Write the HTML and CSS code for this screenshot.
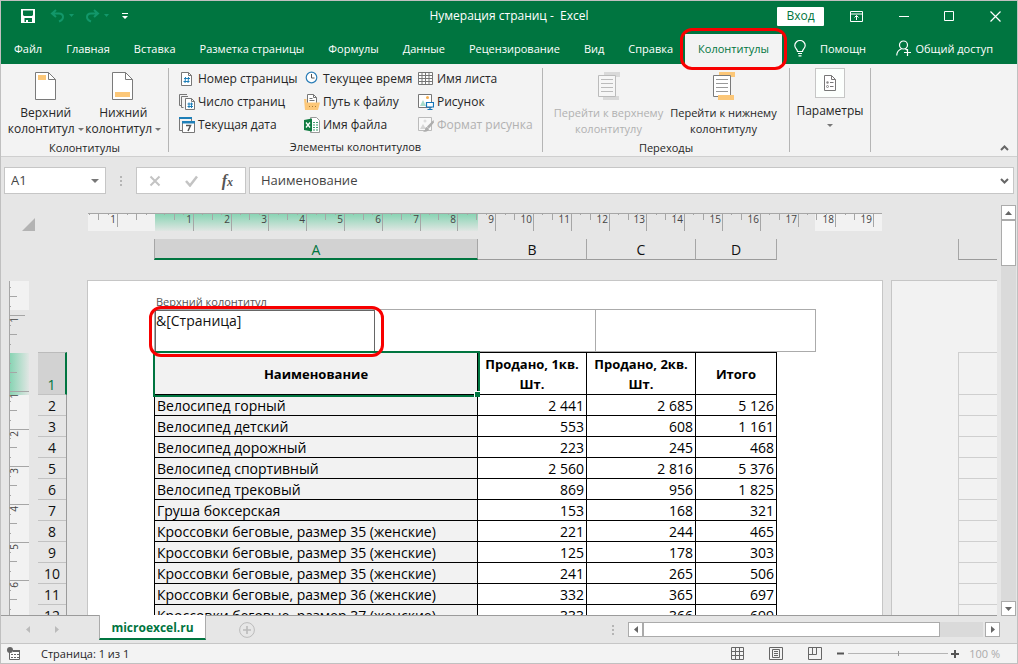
FILE: index.html
```html
<!DOCTYPE html>
<html lang="ru">
<head>
<meta charset="utf-8">
<title>Нумерация страниц - Excel</title>
<link rel="stylesheet" href="styles.css">
</head>
<body>
<div class="window">
  <header class="top">
    <div class="titlebar">
      <div class="quick">
        <button class="icon-btn" aria-label="Сохранить"><svg width="14" height="14" viewBox="0 0 14 14"><path fill="#fff" fill-rule="evenodd" d="M0 0h14v14H0zM2 1.500V6l1 1h8l1-1V1.500zM3.500 9v4H5v-2h2v2h4V9z"/></svg></button>
        <button class="icon-btn dim" aria-label="Отменить"><svg width="24" height="14" viewBox="0 0 24 14"><path d="M6 1L2 4.500 6 8M2 4.500h7q4 0 4 3.500 0 3-4 4.500" fill="none" stroke="#12976a" stroke-width="2"/><path d="M19 5h5l-2.500 3z" fill="#12976a"/></svg></button>
        <button class="icon-btn dim" aria-label="Вернуть"><svg width="24" height="14" viewBox="0 0 24 14"><path d="M9 1l4 3.500L9 8M13 4.500H6Q2 4.500 2 8q0 3 4 4.500" fill="none" stroke="#12976a" stroke-width="2"/><path d="M19 5h5l-2.500 3z" fill="#12976a"/></svg></button>
        <button class="icon-btn" aria-label="Настройка панели"><svg width="6" height="7" viewBox="0 0 6 7"><path d="M0 0h6v1H0zM0 3h6L3 6z" fill="#fff"/></svg></button>
      </div>
      <div class="doc-title">Нумерация страниц&nbsp;-&nbsp; Excel</div>
      <div class="win-controls">
        <button class="login">Вход</button>
        <button class="icon-btn" aria-label="Параметры отображения ленты"><svg width="13" height="11" viewBox="0 0 13 11"><path d="M.5.5h12v10H.5zM.5 3h12M6.500 9V4.500M4.500 6.500l2-2 2 2" fill="none" stroke="#fff"/></svg></button>
        <button class="icon-btn" aria-label="Свернуть"><svg width="11" height="11" viewBox="0 0 11 11"><path d="M1 5.500h10" stroke="#fff"/></svg></button>
        <button class="icon-btn" aria-label="Развернуть"><svg width="11" height="11" viewBox="0 0 11 11"><path d="M.5.5h9v9h-9z" fill="none" stroke="#fff"/></svg></button>
        <button class="icon-btn" aria-label="Закрыть"><svg width="11" height="11" viewBox="0 0 11 11"><path d="M.5.5l10 10M10.500.5l-10 10" fill="none" stroke="#fff" stroke-width="1.200"/></svg></button>
      </div>
    </div>
    <nav class="tabs">
      <button class="tab">Файл</button>
      <button class="tab">Главная</button>
      <button class="tab">Вставка</button>
      <button class="tab">Разметка страницы</button>
      <button class="tab">Формулы</button>
      <button class="tab">Данные</button>
      <button class="tab">Рецензирование</button>
      <button class="tab">Вид</button>
      <button class="tab">Справка</button>
      <button class="tab active">Колонтитулы</button>
      <button class="tab helper"><svg width="12" height="17" viewBox="0 0 12 17"><path d="M3.500 11.500C3.500 9 .8 8.500.8 5.500a5.200 5 0 0 1 10.400 0C11.200 8.500 8.500 9 8.500 11.500zM4 13.500h4M4.500 15.800h3" fill="none" stroke="#fff" stroke-width="1.200"/></svg>Помощн</button>
      <button class="tab share"><svg width="15" height="17" viewBox="0 0 15 17"><circle cx="7.500" cy="5" r="4" fill="none" stroke="#fff" stroke-width="1.200"/><path d="M.7 15.500Q1 10.500 5.500 8.800M9.300 8.800L11 10M8 12.500h7M11.500 9v7" fill="none" stroke="#fff" stroke-width="1.200"/></svg>Общий доступ</button>
    </nav>
  </header>

  <section class="ribbon">
    <div class="group g-hf">
      <div class="group-body">
        <button class="big"><svg width="22" height="28" viewBox="0 0 22 28"><path d="M.5.5h13l7 7v20H.5z" fill="#fff" stroke="#7a7a7a"/><path d="M13.500.5v7h7" fill="none" stroke="#7a7a7a"/><path d="M3 3h8v5H3z" fill="#fcc778"/></svg><span>Верхний<br>колонтитул <i class="caret"></i></span></button>
        <button class="big"><svg width="22" height="28" viewBox="0 0 22 28"><path d="M.5.5h13l7 7v20H.5z" fill="#fff" stroke="#7a7a7a"/><path d="M13.500.5v7h7" fill="none" stroke="#7a7a7a"/><path d="M3 20h15v5H3z" fill="#fcc778"/></svg><span>Нижний<br>колонтитул <i class="caret"></i></span></button>
      </div>
      <div class="group-label">Колонтитулы</div>
    </div>
    <div class="group g-items">
      <div class="group-body items">
        <button class="small"><svg width="16" height="16" viewBox="0 0 16 16"><path d="M2.500 1.500h7l3 3v10h-10z" fill="#fff" stroke="#777"/><path d="M9.500 1.500v3h3" fill="none" stroke="#777"/><path d="M6.500 6l-.5 6M9.500 6L9 12M5 7.500h6M4.500 10.500h6" stroke="#1e7fb8" fill="none"/></svg>Номер страницы</button>
        <button class="small"><svg width="16" height="16" viewBox="0 0 16 16"><path d="M2.500 11.500h-2V.5H8M4.500 13.500h-2V2.500H9" fill="none" stroke="#777"/><path d="M6.500 4.500h6l3 3v8h-9z" fill="#fff" stroke="#777"/><path d="M12.500 4.500v3h3" fill="none" stroke="#777"/><path d="M10 8.500V14M12.500 8.500V14M8.500 10h5.500M8.500 12.500h5.500" stroke="#1e7fb8" fill="none"/></svg>Число страниц</button>
        <button class="small"><svg width="16" height="16" viewBox="0 0 16 16"><path d="M3 13.500H.5v-12h12V4" fill="none" stroke="#777"/><path d="M0 0h13v2H0z" fill="#1e7fb8"/><path d="M3.500 4.500h12v11h-12z" fill="#fff" stroke="#777"/><path d="M3 4h13v2.500H3z" fill="#1e7fb8"/><path d="M7 8.500h4.500L9 14" fill="none" stroke="#555" stroke-width="1.500"/></svg>Текущая дата</button>
        <button class="small"><svg width="16" height="16" viewBox="0 0 16 16"><circle cx="7.500" cy="6.500" r="5.300" fill="#fff" stroke="#2d7fb8" stroke-width="1.200"/><path d="M7.500 3v4h3" fill="none" stroke="#555"/></svg>Текущее время</button>
        <button class="small"><svg width="16" height="16" viewBox="0 0 16 16"><path d="M3.500 10V.5h6l3 3V10" fill="#fff" stroke="#777"/><path d="M9.500.5v3h3M5.500 4.500h3M5.500 6.500h5" fill="none" stroke="#777"/><path d="M0 5h2.500v3.500H16L14 16H1z" fill="#fcc778"/><path d="M5 12.500h1M8 12.500h1M11 12.500h1" stroke="#a67c35"/></svg>Путь к файлу</button>
        <button class="small"><svg width="16" height="16" viewBox="0 0 16 16"><path d="M6.500.5h6l3 3v12h-9z" fill="#fff" stroke="#999"/><path d="M9 5.500h2M12 5.500h2M9 8h2M12 8h2M9 10.500h2M12 10.500h2M9 13h2M12 13h2" stroke="#3d9b6d"/><path d="M0 3l8-1.500v13L0 13z" fill="#107c41"/><path d="M2 5.500l4 5M6 5.500l-4 5" stroke="#fff" stroke-width="1.300"/></svg>Имя файла</button>
        <button class="small"><svg width="16" height="16" viewBox="0 0 16 16"><path d="M.5 1.500h14v12H.5zM.5 4.500h14M.5 7.500h14M.5 10.500h14M4 1.500v12M7.500 1.500v12M11 1.500v12" fill="#fff" stroke="#777"/></svg>Имя листа</button>
        <button class="small"><svg width="16" height="16" viewBox="0 0 16 16"><path d="M.5.5h13v13H.5z" fill="#fff" stroke="#777"/><circle cx="9.500" cy="3.500" r="1.500" fill="#f5ad4e"/><path d="M2 12l3-6 3 6z" fill="#a7dccb"/><path d="M8.500 8.500h7v4.500h-7zM12 13v2.500M9.500 15.500h5" fill="#fff" stroke="#1075bb" stroke-width="1.200"/></svg>Рисунок</button>
        <button class="small" disabled><svg width="16" height="16" viewBox="0 0 16 16"><path d="M.5.5h13v13H.5z" fill="#f8f8f8" stroke="#bbb"/><circle cx="7" cy="4" r="1.500" fill="#ddd"/><path d="M2 12l3-5 3 5z" fill="#d5d5d5"/><path d="M15.500 3L9 9.500l2 2 5-6zM9 10q-2 0-2 3l-2 1.500q5 1 6-2.500z" fill="#adadad"/></svg>Формат рисунка</button>
      </div>
      <div class="group-label">Элементы колонтитулов</div>
    </div>
    <div class="group g-nav">
      <div class="group-body">
        <button class="big" disabled><svg width="22" height="28" viewBox="0 0 22 28"><path d="M6 0h16v5H6zM5 24h16v4H5z" fill="#d9d9d9"/><path d="M.5 3.500h17v21H.5z" fill="#f6f6f6" stroke="#bbb"/><path d="M3 7.500h12M3 11.500h12M3 15.500h12M3 19.500h12" stroke="#bbb"/></svg><span>Перейти к верхнему<br>колонтитулу</span></button>
        <button class="big"><svg width="22" height="28" viewBox="0 0 22 28"><path d="M6 0h16v5H6z" fill="#fcc778"/><path d="M.5 3.500h17v21H.5z" fill="#fff" stroke="#7a7a7a"/><path d="M3 7.500h12M3 11.500h12M3 15.500h12M3 19.500h12" stroke="#999"/><path d="M5 23h16v5H5z" fill="#fcc778"/></svg><span>Перейти к нижнему<br>колонтитулу</span></button>
      </div>
      <div class="group-label">Переходы</div>
    </div>
    <div class="group g-opt">
      <button class="options"><span class="options-icon"><svg width="12" height="16" viewBox="0 0 12 16"><path d="M.5.5h7l4 4v11H.5z" fill="#fff" stroke="#777"/><path d="M7.500.5v4h4M6 7.500h3.500M6 11.500h3.500" fill="none" stroke="#777"/><circle cx="3.500" cy="7.500" r="1.200" fill="#888"/><circle cx="3.500" cy="11.500" r="1" fill="none" stroke="#888"/></svg></span>Параметры<i class="caret"></i></button>
    </div>
    <button class="collapse" aria-label="Свернуть ленту"><svg width="9" height="6" viewBox="0 0 9 6"><path d="M1 5l3.500-3.500L8 5" fill="none" stroke="#666" stroke-width="2"/></svg></button>
  </section>

  <section class="formula-bar">
    <div class="name-box"><input type="text" value="A1" aria-label="Имя"><i class="caret"></i></div>
    <div class="grip"><i></i><i></i><i></i></div>
    <div class="fx-box">
      <button class="icon-btn" aria-label="Отмена"><svg width="12" height="12" viewBox="0 0 12 12"><path d="M1.500 1.500l9 9M10.500 1.500l-9 9" stroke="#c3c3c3" stroke-width="2"/></svg></button>
      <button class="icon-btn" aria-label="Ввод"><svg width="13" height="12" viewBox="0 0 13 12"><path d="M1 6l4 4.500L12 1.500" fill="none" stroke="#c3c3c3" stroke-width="2.500"/></svg></button>
      <button class="icon-btn fx" aria-label="Вставить функцию">f<small>x</small></button>
    </div>
    <div class="formula"><input type="text" value="Наименование" aria-label="Строка формул"><svg width="9" height="6" viewBox="0 0 9 6"><path d="M1 1l3.500 3.500L8 1" fill="none" stroke="#666" stroke-width="2"/></svg></div>
  </section>

  <main class="work">
    <div class="canvas">
      <div class="ruler-row">
        <svg class="corner" width="13" height="13" viewBox="0 0 13 13"><path d="M13 0v13H0z" fill="#b3b3b3"/></svg>
        <svg class="h-ruler" width="795" height="18" viewBox="0 0 795 18">
          <defs><linearGradient id="gh" x1="0" y1="0" x2="0" y2="1"><stop offset="0" stop-color="#84d3b1"/><stop offset="1" stop-color="#e0e6e3"/></linearGradient></defs>
          <path d="M0 0h67v18H0zM727 0h67v18h-67z" fill="#f2f2f2"/>
          <path d="M67 0h323v18H67z" fill="url(#gh)"/>
          <path class="tick" d="M0 .5h794M29.500 0v14M105.500 0v18M143.500 0v18M180.500 0v18M218.500 0v18M256.500 0v18M294.500 0v18M332.500 0v18M369.500 0v18M407.500 0v18M445.500 0v18M483.500 0v18M521.500 0v18M558.500 0v18M596.500 0v18M634.500 0v18M672.500 0v18M710.500 0v14M747.500 0v14M785.500 0v14"/>
          <path class="tick" d="M10.500 0v7M48.500 0v7M86.500 0v7M124.500 0v7M161.500 0v7M199.500 0v7M237.500 0v7M275.500 0v7M313.500 0v7M350.500 0v7M388.500 0v7M426.500 0v7M464.500 0v7M502.500 0v7M540.500 0v7M577.500 0v7M615.500 0v7M653.500 0v7M691.500 0v7M728.500 0v7M766.500 0v7"/>
          <path class="tick" d="M1.500 0v2M20.500 0v2M39.500 0v2M58.500 0v2M76.500 0v2M95.500 0v2M114.500 0v2M133.500 0v2M152.500 0v2M171.500 0v2M190.500 0v2M209.500 0v2M228.500 0v2M247.500 0v2M265.500 0v2M284.500 0v2M303.500 0v2M322.500 0v2M341.500 0v2M360.500 0v2M379.500 0v2M398.500 0v2M417.500 0v2M435.500 0v2M454.500 0v2M473.500 0v2M492.500 0v2M511.500 0v2M530.500 0v2M549.500 0v2M568.500 0v2M587.500 0v2M605.500 0v2M624.500 0v2M643.500 0v2M662.500 0v2M681.500 0v2M700.500 0v2M719.500 0v2M738.500 0v2M757.500 0v2M775.500 0v2"/>
          <g class="nums end"><text x="28" y="10">1</text><text x="104" y="10">1</text><text x="142" y="10">2</text><text x="179" y="10">3</text><text x="217" y="10">4</text><text x="255" y="10">5</text><text x="293" y="10">6</text><text x="331" y="10">7</text><text x="368" y="10">8</text><text x="406" y="10">9</text><text x="444" y="10">10</text><text x="482" y="10">11</text><text x="520" y="10">12</text><text x="557" y="10">13</text><text x="595" y="10">14</text><text x="633" y="10">15</text><text x="671" y="10">16</text><text x="709" y="10">17</text><text x="746" y="10">18</text><text x="784" y="10">19</text></g>
        </svg>
      </div>
      <div class="col-heads">
        <div class="col-head a">A</div><div class="col-head b">B</div><div class="col-head b">C</div><div class="col-head d">D</div>
        <div class="col-head next"></div>
      </div>
      <div class="pages">
        <svg class="v-ruler" width="20" height="340" viewBox="0 0 20 340">
          <defs><linearGradient id="gv"><stop offset="0" stop-color="#84d3b1"/><stop offset="1" stop-color="#e0e6e3"/></linearGradient></defs>
          <path d="M0 1h20v29H0zM0 115h20v225H0z" fill="#f2f2f2"/>
          <path d="M0 73h20v42H0z" fill="url(#gv)"/>
          <path class="tick" d="M.5 1v339M0 35.500h16M0 111.500h20M0 149.500h20M0 186.500h20M0 224.500h20M0 262.500h20M0 300.500h20"/>
          <path class="tick" d="M0 16.500h8M0 54.500h8M0 92.500h8M0 130.500h8M0 167.500h8M0 205.500h8M0 243.500h8M0 281.500h8M0 319.500h8M0 7.500h2M0 26.500h2M0 45.500h2M0 64.500h2M0 83.500h2M0 102.500h2M0 121.500h2M0 140.500h2M0 158.500h2M0 177.500h2M0 196.500h2M0 215.500h2M0 234.500h2M0 253.500h2M0 272.500h2M0 291.500h2M0 310.500h2M0 329.500h2"/>
          <g class="nums end"><text transform="translate(9 37) rotate(-90)">1</text><text transform="translate(9 113) rotate(-90)">1</text><text transform="translate(9 151) rotate(-90)">2</text><text transform="translate(9 188) rotate(-90)">3</text><text transform="translate(9 226) rotate(-90)">4</text><text transform="translate(9 264) rotate(-90)">5</text><text transform="translate(9 302) rotate(-90)">6</text></g>
        </svg>
        <div class="row-heads">
          <div class="row-head first">1</div><div class="row-head">2</div><div class="row-head">3</div><div class="row-head">4</div><div class="row-head">5</div><div class="row-head">6</div><div class="row-head">7</div><div class="row-head">8</div><div class="row-head">9</div><div class="row-head">10</div><div class="row-head">11</div><div class="row-head">12</div>
        </div>
        <div class="page">
          <label class="hf-label" for="hf-left">Верхний колонтитул</label>
          <div class="hf">
            <div class="hf-cell current"><input id="hf-left" type="text" value="&amp;[Страница]"></div>
            <div class="hf-cell"></div>
            <div class="hf-cell"></div>
          </div>
          <table class="sheet">
            <colgroup><col class="ca"><col class="cb"><col class="cb"><col class="cd"></colgroup>
            <thead><tr><th class="selected">Наименование<i class="handle"></i></th><th>Продано, 1кв. Шт.</th><th>Продано, 2кв. Шт.</th><th>Итого</th></tr></thead>
            <tbody>
              <tr><td>Велосипед горный</td><td>2 441</td><td>2 685</td><td>5 126</td></tr>
              <tr><td>Велосипед детский</td><td>553</td><td>608</td><td>1 161</td></tr>
              <tr><td>Велосипед дорожный</td><td>223</td><td>245</td><td>468</td></tr>
              <tr><td>Велосипед спортивный</td><td>2 560</td><td>2 816</td><td>5 376</td></tr>
              <tr><td>Велосипед трековый</td><td>869</td><td>956</td><td>1 825</td></tr>
              <tr><td>Груша боксерская</td><td>153</td><td>168</td><td>321</td></tr>
              <tr><td>Кроссовки беговые, размер 35 (женские)</td><td>221</td><td>244</td><td>465</td></tr>
              <tr><td>Кроссовки беговые, размер 35 (женские)</td><td>125</td><td>178</td><td>303</td></tr>
              <tr><td>Кроссовки беговые, размер 35 (женские)</td><td>241</td><td>265</td><td>506</td></tr>
              <tr><td>Кроссовки беговые, размер 36 (женские)</td><td>332</td><td>365</td><td>697</td></tr>
              <tr><td>Кроссовки беговые, размер 37 (женские)</td><td>333</td><td>366</td><td>699</td></tr>
            </tbody>
          </table>
        </div>
        <div class="page next-page"><div class="ghost-grid"></div></div>
      </div>
    </div>
    <div class="v-scroll">
      <button aria-label="Вверх"><svg width="7" height="4" viewBox="0 0 7 4"><path d="M0 4l3.500-4L7 4z" fill="#666"/></svg></button>
      <div class="thumb"></div>
      <div class="track"></div>
      <button aria-label="Вниз"><svg width="7" height="4" viewBox="0 0 7 4"><path d="M0 0l3.500 4L7 0z" fill="#666"/></svg></button>
    </div>
  </main>

  <div class="sheet-bar">
    <div class="sheet-nav">
      <button class="icon-btn" aria-label="Предыдущий лист"><svg width="4" height="7" viewBox="0 0 4 7"><path d="M4 0v7L0 3.500z" fill="#bbb"/></svg></button>
      <button class="icon-btn" aria-label="Следующий лист"><svg width="4" height="7" viewBox="0 0 4 7"><path d="M0 0v7l4-3.500z" fill="#bbb"/></svg></button>
    </div>
    <button class="sheet-tab">microexcel.ru</button>
    <button class="icon-btn add" aria-label="Новый лист"><svg width="16" height="16" viewBox="0 0 16 16"><circle cx="8" cy="8" r="7.400" fill="none" stroke="#bbb"/><path d="M8 4v8M4 8h8" stroke="#bbb" stroke-width="1.600"/></svg></button>
    <div class="grip"><i></i><i></i><i></i></div>
    <div class="h-scroll">
      <button aria-label="Влево"><svg width="4" height="7" viewBox="0 0 4 7"><path d="M4 0v7L0 3.500z" fill="#666"/></svg></button>
      <div class="thumb"></div>
      <div class="track"></div>
      <button aria-label="Вправо"><svg width="4" height="7" viewBox="0 0 4 7"><path d="M0 0v7l4-3.500z" fill="#666"/></svg></button>
    </div>
  </div>

  <footer class="status">
    <button class="icon-btn" aria-label="Запись макроса"><svg width="13" height="13" viewBox="0 0 13 13"><path d="M2.500 3.500h10v9h-10z" fill="#fff" stroke="#666"/><path d="M6 3h7v2H6z" fill="#666"/><path d="M4 7.500h2M7 7.500h2M10 7.500h2M4 10.500h2M7 10.500h2M10 10.500h2" stroke="#666"/><circle cx="3" cy="3" r="3" fill="#666"/></svg></button>
    <span class="status-text">Страница: 1 из 1</span>
    <div class="views">
      <button class="icon-btn" aria-label="Обычный"><svg width="13" height="13" viewBox="0 0 13 13"><path d="M.5.5h12v12H.5zM.5 4.500h12M.5 8.500h12M4.500.5v12M8.500.5v12" fill="none" stroke="#666"/></svg></button>
      <button class="icon-btn" aria-label="Разметка страницы"><svg width="14" height="13" viewBox="0 0 14 13"><path d="M.5.5h13v12H.5zM3.500 2.500h7v8h-7zM5 4.500h4M5 6.500h4M5 8.500h4" fill="none" stroke="#666"/></svg></button>
      <button class="icon-btn" aria-label="Страничный режим"><svg width="14" height="13" viewBox="0 0 14 13"><path d="M.5.5h13v12H.5zM4.500.5v7M8.500.5v7M.5 7.500h8" fill="none" stroke="#666"/></svg></button>
    </div>
    <div class="zoom">
      <button class="icon-btn" aria-label="Уменьшить"><svg width="7" height="7" viewBox="0 0 7 7"><path d="M0 3.500h7" stroke="#555" stroke-width="2"/></svg></button>
      <input type="range" min="0" max="100" value="50" aria-label="Масштаб">
      <button class="icon-btn" aria-label="Увеличить"><svg width="8" height="8" viewBox="0 0 8 8"><path d="M0 4h8M4 0v8" stroke="#555" stroke-width="2"/></svg></button>
      <span class="pct">100 %</span>
    </div>
  </footer>
</div>
</body>
</html>
```
FILE: styles.css
```css
* { box-sizing: border-box; }
body { margin: 0; font: 12px/16px "Open Sans", "Noto Sans", sans-serif; color: #262626; }
button, input { font: inherit; color: inherit; border: 0; padding: 0; margin: 0; background: none; border-radius: 0; outline: 0; }
svg { display: block; flex: none; }
.window { display: flex; flex-direction: column; height: 100vh; border: 1px solid #c0c0c0; background: #e6e6e6; overflow: hidden; }
.icon-btn { display: flex; align-items: center; justify-content: center; flex: none; }
.caret { display: inline-block; border: 3px solid transparent; border-top-color: #777; border-bottom: 0; vertical-align: middle; }

.top { background: #007540; color: #fff; flex: none; }
.titlebar { display: grid; grid-template-columns: 1fr auto 1fr; align-items: center; height: 30px; }
.quick { display: flex; align-items: center; gap: 14px; padding-left: 20px; }
.quick .dim { margin-left: 1px; margin-right: -4px; }
.quick .icon-btn:last-child { margin-left: 3px; }
.win-controls { display: flex; align-items: center; justify-content: flex-end; gap: 35px; padding-right: 16px; }
.login { background: #fff; color: #007540; width: 47px; height: 19px; border-radius: 1px; margin-right: -9px; }
.tabs { display: flex; height: 33px; align-items: stretch; padding-left: 1px; font-size: 11px; }
.tab { padding: 2px 12px 0; white-space: nowrap; display: flex; align-items: center; }
.tab.active { position: relative; background: #f3f3f3; color: #007540; margin-top: 3px; padding: 0 13px 1px; }
.tab.active::after { content: ""; position: absolute; inset: -6px -5px; border: 3px solid #f80000; border-radius: 12px; z-index: 5; }
.helper { gap: 14px; }
.share { gap: 4px; padding-left: 0; padding-right: 0; margin-left: auto; margin-right: 24px; }

.ribbon { display: flex; flex: none; background: #f3f3f3; border-bottom: 1px solid #cfcfcf; height: 93px; padding: 4px 0; }
.group { display: flex; flex-direction: column; justify-content: space-between; border-right: 1px solid #b5b5b5; height: 84px; }
.group-body { display: flex; height: 73px; flex: none; }
.group-label { text-align: center; font-size: 11px; line-height: 14px; flex: none; }
.big { display: flex; flex-direction: column; align-items: center; gap: 5px; padding-top: 4px; white-space: nowrap; }
.g-hf { width: 168px; padding: 0 6px; }
.g-hf .big { flex: 1; }
.g-items { width: 374px; }
.items { display: grid; grid-template-rows: repeat(3, 23px); grid-auto-flow: column; grid-template-columns: 125px 114px 1fr; padding-left: 10px; margin-top: -1px; }
.small { display: flex; align-items: center; gap: 3px; white-space: nowrap; }
button:disabled { color: #b1b1b1; }
.g-nav { width: 247px; padding: 0 8px; }
.g-nav .big { flex: 1; font-size: 11px; }
.g-opt { width: 81px; }
.options { display: flex; flex-direction: column; align-items: center; gap: 5px; }
.options-icon { border: 1px solid #c6c6c6; background: #fcfffd; width: 30px; height: 30px; display: flex; align-items: center; justify-content: center; }
.collapse { margin-left: auto; align-self: flex-end; padding: 0 8px 1px 0; }

.formula-bar { display: flex; flex: none; padding: 10px 3px 11px; height: 48px; color: #444; font-size: 13px; }
.name-box, .fx-box, .formula { background: #fff; border: 1px solid #c6c6c6; display: flex; align-items: center; }
.name-box { width: 102px; padding: 0 6px; }
.name-box input, .formula input { flex: 1; min-width: 0; padding-bottom: 2px; }
.name-box .caret { border-width: 4px; border-bottom: 0; }
.grip { display: flex; flex-direction: column; justify-content: center; gap: 2px; width: 30px; align-items: center; }
.grip i { width: 2px; height: 2px; background: #b5b5b5; }
.fx-box { width: 110px; justify-content: space-between; padding: 0 12px; }
.fx { font: italic bold 16px "Liberation Serif", serif; color: #555; }
.fx small { font-size: 12px; padding-top: 4px; }
.formula { flex: 1; margin-left: 3px; padding: 0 4px 0 11px; }

.work { display: flex; flex: 1; min-height: 0; }
.canvas { flex: 1; min-width: 0; overflow: hidden; padding: 8px 0 0 8px; border-bottom: 1px solid #9b9b9b; margin-right: 4px; display: flex; flex-direction: column; }
.ruler-row { display: flex; align-items: flex-end; gap: 53px; padding-left: 13px; flex: none; }
.tick { fill: none; stroke: #a6a6a6; }
.nums { font-size: 10px; fill: #444; }
.end { text-anchor: end; }
.col-heads { display: flex; height: 21px; margin: 8px 0 20px 145px; flex: none; font-size: 14px; color: #111; }
.col-head { display: flex; align-items: center; justify-content: center; border-bottom: 1px solid #9b9b9b; border-right: 1px solid #a6a6a6; flex: none; padding-top: 2px; }
.a { width: 324px; background: #d2d2d2; border-bottom: 2px solid #007540; border-left: 1px solid #a6a6a6; color: #007540; }
.b { width: 109px; }
.d { width: 81px; }
.next { flex: 1; margin-left: 181px; border-left: 1px solid #a6a6a6; border-right: 0; }
.pages { display: flex; flex: 1; min-height: 0; align-items: flex-start; }
.row-heads { width: 29px; margin: 72px 20px 0 9px; flex: none; font-size: 14px; color: #111; border-right: 1px solid #9b9b9b; }
.row-head { height: 21px; line-height: 21px; text-align: center; border-bottom: 1px solid #c2c2c2; }
.row-head.first { height: 43px; padding-top: 21px; background: #d2d2d2; color: #007540; border-top: 1px solid #bbb; border-right: 2px solid #007540; margin-right: -1px; }
.page { flex: none; width: 796px; height: 400px; background: #fff; border: 1px solid #c6c6c6; padding: 13px 0 0 66px; }
.hf-label { display: block; font-size: 11px; line-height: 15px; color: #555; padding-left: 2px; white-space: nowrap; }
.hf { display: grid; grid-template-columns: 220px 221px 219px; height: 43px; border: 1px solid #ababab; border-bottom: 0; width: 662px; }
.hf-cell { border-right: 1px solid #ababab; border-bottom: 1px solid #ababab; }
.hf-cell:last-child { border-right: 0; }
.current { position: relative; border: 1px solid #666; }
.current::after { content: ""; position: absolute; inset: -5px -10px -6px -7px; border: 3px solid #f80000; border-radius: 12px; pointer-events: none; z-index: 3; }
.current input { display: block; width: 100%; font-size: 14px; line-height: 20px; height: 20px; color: #111; }
.sheet { border-collapse: collapse; table-layout: fixed; width: 623px; font-size: 14px; color: #000; }
.ca { width: 323px; } .cb { width: 109px; } .cd { width: 81px; }
.sheet th, .sheet td { border: 1px solid #000; padding: 2px 2px 0; height: 21px; line-height: 18px; text-align: right; white-space: nowrap; }
.sheet th { text-align: center; white-space: normal; height: 42px; line-height: 20px; font-size: 13px; padding: 0; }
.sheet td:first-child, .sheet .selected { background: #f2f2f2; text-align: left; }
.sheet .selected { position: relative; text-align: center; outline: 2px solid #007540; outline-offset: 0; }
.handle { position: absolute; right: -3px; bottom: -3px; width: 5px; height: 5px; background: #007540; border: 1px solid #fff; box-sizing: content-box; border-right: 0; border-bottom: 0; }
.next-page { flex: 1; width: auto; min-width: 0; margin-left: 8px; background: #f2f2f2; border-right: 0; padding: 71px 0 0 66px; }
.ghost-grid { height: 320px; border-left: 1px solid #cfcfcf; border-top: 1px solid #cfcfcf; background: repeating-linear-gradient(#f2f2f2 0 20px, #cfcfcf 20px 21px) 0 21px no-repeat; }

.v-scroll { display: flex; flex-direction: column; width: 15px; margin-right: 1px; }
.v-scroll button, .h-scroll button { background: #fff; border: 1px solid #ababab; width: 15px; height: 15px; display: flex; align-items: center; justify-content: center; flex: none; }
.thumb { background: #fff; border: 1px solid #ababab; }
.v-scroll .thumb { height: 46px; }
.track { background: #dadada; flex: 1; }

.sheet-bar { display: flex; flex: none; height: 27px; align-items: center; }
.sheet-nav { display: flex; width: 98px; gap: 25px; padding-left: 25px; }
.sheet-tab { align-self: stretch; background: #fff; width: 107px; margin: -1px 0 3px; border: 1px solid #ababab; border-top: 0; border-bottom: 2px solid #007540; color: #007540; font-weight: 700; position: relative; padding-top: 3px; }
.add { margin-left: 33px; }
.sheet-bar .grip { margin-left: auto; }
.h-scroll { display: flex; flex: 0 1 372px; margin-right: 17px; }
.h-scroll .thumb { flex: 0 0 297px; }
.h-scroll .track { margin-right: 2px; }

.status { display: flex; flex: none; height: 20px; align-items: center; background: #f3f3f3; border-top: 1px solid #c6c6c6; padding-left: 6px; font-size: 11px; }
.status-text { margin-left: 21px; }
.views { display: flex; gap: 25px; margin-left: auto; }
.zoom { display: flex; align-items: center; margin-left: 15px; padding-right: 17px; }
.zoom input { appearance: none; width: 100px; height: 9px; margin: 0 3px 0 4px; background: linear-gradient(#b5b5b5, #b5b5b5) center / 100% 1px no-repeat; }
.zoom input::-webkit-slider-thumb { appearance: none; width: 1px; height: 5px; background: #999; }
.pct { color: #aaa; margin-left: 10px; }
```
